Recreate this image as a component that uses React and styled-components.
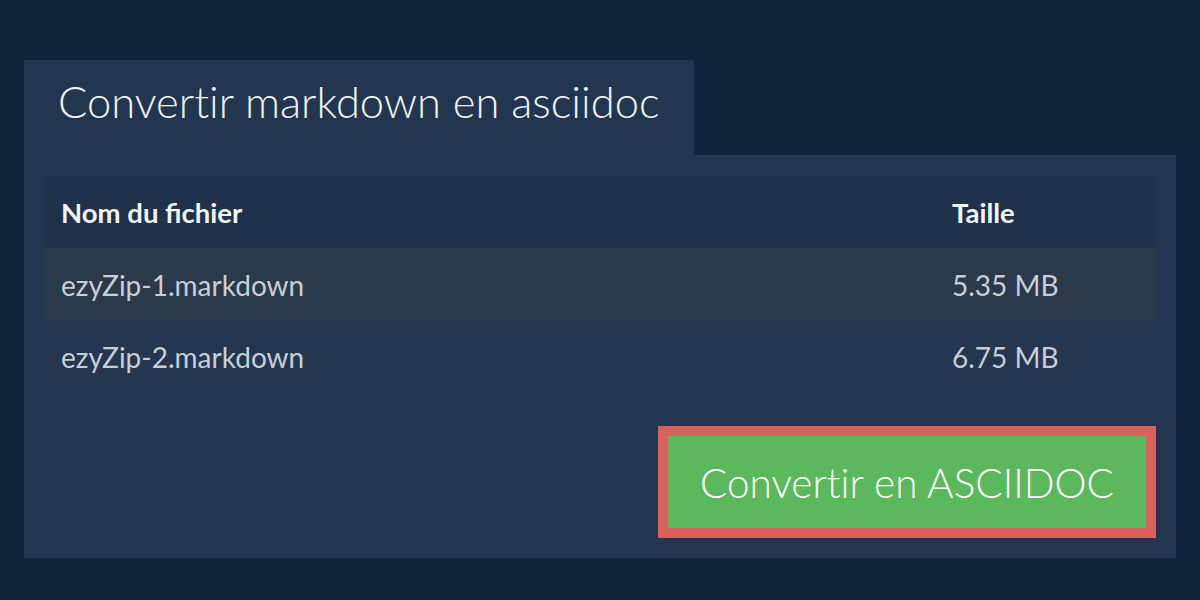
import React from 'react'
import styled, { createGlobalStyle } from 'styled-components'

const files = [
  { name: 'ezyZip-1.markdown', size: '5.35 MB' },
  { name: 'ezyZip-2.markdown', size: '6.75 MB' },
]

const App = () => {
  return (
    <Page>
      <GlobalStyle />
      <Tab>Convertir markdown en asciidoc</Tab>
      <Panel>
        <Table>
          <Row $head>
            <Cell>Nom du fichier</Cell>
            <Cell>Taille</Cell>
          </Row>
          {files.map((f, i) => (
            <Row key={f.name} $odd={i % 2 === 0}>
              <Cell>{f.name}</Cell>
              <Cell>{f.size}</Cell>
            </Row>
          ))}
        </Table>
        <Actions>
          <ConvertButton>Convertir en ASCIIDOC</ConvertButton>
        </Actions>
      </Panel>
    </Page>
  )
}

const GlobalStyle = createGlobalStyle`
  html, body {
    margin: 0;
    background: #11243a;
    font-family: Lato, "Noto Sans", sans-serif;
  }
`

const Page = styled.div`
  width: 1200px;
  height: 600px;
  box-sizing: border-box;
  padding: 60px 24px 0;
  display: flex;
  flex-direction: column;
  align-items: flex-start;
`

const Tab = styled.div`
  width: 670px;
  height: 95px;
  box-sizing: border-box;
  background: #22364f;
  color: #f1f3f5;
  font-size: 43.5px;
  font-weight: 300;
  font-variant-ligatures: none;
  padding: 0 0 14px 34px;
  display: flex;
  align-items: center;
`

const Panel = styled.div`
  align-self: stretch;
  background: #22364f;
  padding: 20px 20px 20px;
  display: flex;
  flex-direction: column;
`

const Table = styled.div`
  display: flex;
  flex-direction: column;
`

const Row = styled.div`
  display: grid;
  grid-template-columns: 891px 1fr;
  align-items: center;
  height: ${p => (p.$head ? '73px' : '72px')};
  background: ${p => (p.$head ? '#1f3249' : p.$odd ? '#2b3a4b' : '#24374f')};
  color: ${p => (p.$head ? '#f3f4f6' : '#c9ced5')};
  font-size: ${p => (p.$head ? '27.5px' : '28px')};
  font-weight: ${p => (p.$head ? 700 : 400)};
`

const Cell = styled.div`
  padding-left: 17px;
  padding-top: 2px;
`

const Actions = styled.div`
  display: flex;
  justify-content: flex-end;
  margin-top: 34px;
`

const ConvertButton = styled.button`
  width: 498px;
  height: 112px;
  box-sizing: border-box;
  border: 10px solid #db5f5d;
  background: #5cb85c;
  color: #ffffff;
  font-family: Lato, "Noto Sans", sans-serif;
  font-size: 40.5px;
  font-weight: 300;
  font-variant-ligatures: none;
  padding: 0;
  cursor: pointer;
`

export default App
